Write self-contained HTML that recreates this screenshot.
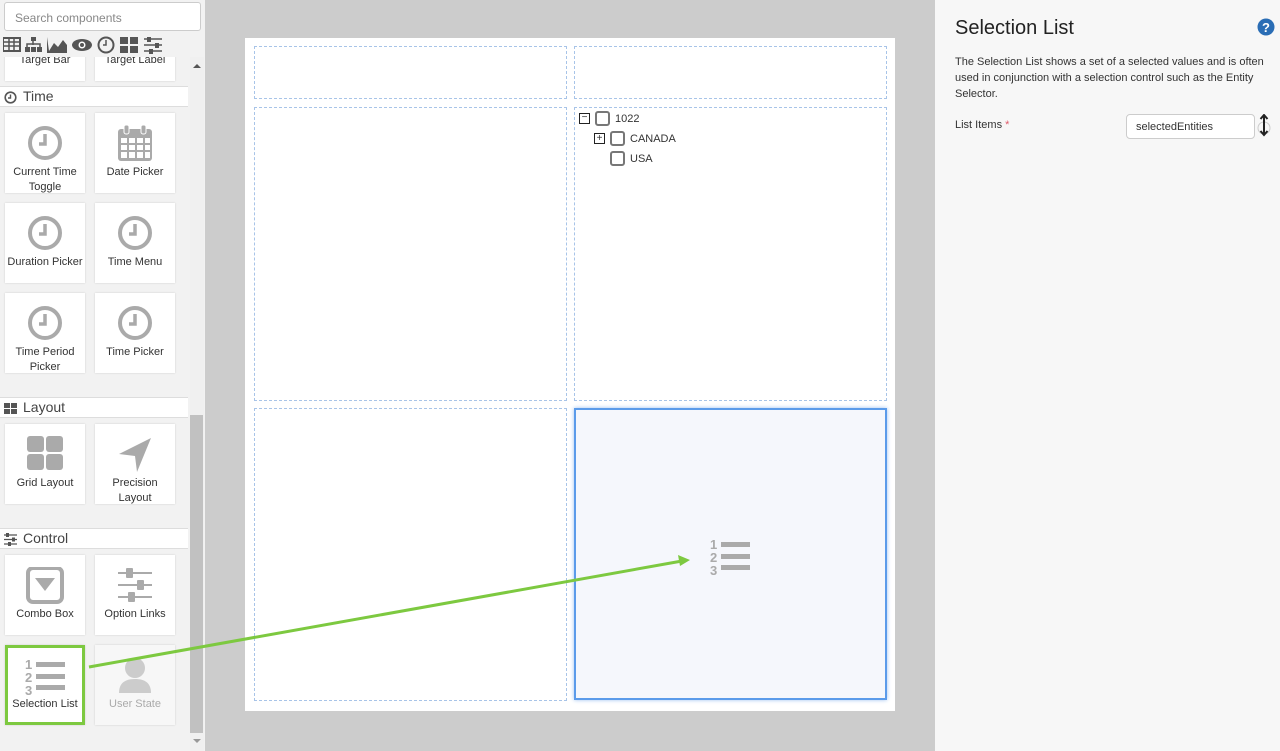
<!DOCTYPE html>
<html><head><meta charset="utf-8"><style>
*{box-sizing:border-box;margin:0;padding:0}
body{width:1280px;height:751px;overflow:hidden;position:relative;font-family:"Liberation Sans",sans-serif;background:#ccc}
.side{position:absolute;left:0;top:0;width:205px;height:751px;background:#f2f2f2}
.search{position:absolute;left:4px;top:2px;width:197px;height:29px;border:1px solid #ccc;border-radius:3px;background:#fff;font-size:12px;color:#888;padding:8px 10px}
.icons{position:absolute;left:3px;top:35px;height:20px;width:190px}
.tile{position:absolute;width:80px;height:80px;background:#fff;box-shadow:0 0 2px rgba(0,0,0,.15);font-size:11px;color:#333;text-align:center}
.tile .lb{position:absolute;top:52px;left:0;right:0;line-height:15px}
.tile svg{position:absolute;left:20px;top:12px}
.hdr{position:absolute;left:0;width:188px;height:21px;background:#fff;border-top:1px solid #ddd;border-bottom:1px solid #ddd;font-size:14px;color:#444;padding:1px 0 0 23px}
.hdr svg{position:absolute;left:4px;top:4px}
.sb{position:absolute;left:190px;top:57px;width:14px;height:694px;background:#f0f0f0}
.thumb{position:absolute;left:190px;top:415px;width:13px;height:318px;background:#c1c1c1}
.page{position:absolute;left:245px;top:38px;width:650px;height:673px;background:#fff}
.cell{position:absolute;border:1px dashed #a8c4e8}
.right{position:absolute;left:935px;top:0;width:345px;height:751px;background:#f7f7f7}
</style></head><body>
<div class="side">
<div class="search">Search components</div>
<svg class="icons" viewBox="0 0 190 20">
<g fill="#555">
<rect x="0" y="3" width="17" height="13" fill="none" stroke="#555" stroke-width="2"/><path d="M0 7h17M0 11h17M6 3v13M11 3v13" stroke="#555" stroke-width="1.5"/>
<rect x="28" y="2" width="5" height="4"/><rect x="22" y="12" width="5" height="5"/><rect x="28" y="12" width="5" height="5"/><rect x="34" y="12" width="5" height="5"/><path d="M30 6v4M24 12v-3h13v3" stroke="#555" stroke-width="1.5" fill="none"/>
<path d="M44 2v16h20v-2H46z"/><path d="M46 16l5-8 4 4 5-7 4 5v6z"/>
<ellipse cx="79" cy="10" rx="10" ry="6"/><circle cx="79" cy="10" r="3.5" fill="#fff"/><circle cx="79" cy="10" r="2"/>
<circle cx="103" cy="10" r="7.5" fill="none" stroke="#555" stroke-width="2"/><path d="M103 5v5h-3" stroke="#555" stroke-width="1.5" fill="none"/>
<rect x="117" y="2" width="8" height="7"/><rect x="127" y="2" width="8" height="7"/><rect x="117" y="11" width="8" height="7"/><rect x="127" y="11" width="8" height="7"/>
<path d="M141 4h18M141 10h18M141 16h18" stroke="#555" stroke-width="1.5"/><rect x="144" y="2" width="4" height="5"/><rect x="152" y="8" width="4" height="5"/><rect x="146" y="14" width="4" height="5"/>
</g></svg>
<div style="position:absolute;left:0;top:57px;width:190px;height:694px;overflow:hidden">
<div class="tile" style="left:5px;top:-56px"><div class="lb">Target Bar</div></div>
<div class="tile" style="left:95px;top:-56px"><div class="lb">Target Label</div></div>
</div>
<div class="hdr" style="top:86px"><svg width="13" height="13"><circle cx="6.5" cy="6.5" r="5.3" fill="none" stroke="#555" stroke-width="1.6"/><path d="M6.5 3.5v3.5h-2.5" stroke="#555" stroke-width="1.4" fill="none"/></svg>Time</div>
<div class="hdr" style="top:397px"><svg width="13" height="13"><rect x="0" y="1" width="6" height="5" fill="#555"/><rect x="7" y="1" width="6" height="5" fill="#555"/><rect x="0" y="7" width="6" height="5" fill="#555"/><rect x="7" y="7" width="6" height="5" fill="#555"/></svg>Layout</div>
<div class="hdr" style="top:528px"><svg width="13" height="13"><path d="M0 2h13M0 6.5h13M0 11h13" stroke="#555" stroke-width="1.2"/><rect x="2" y="0" width="3" height="4" fill="#555"/><rect x="8" y="4.5" width="3" height="4" fill="#555"/><rect x="4" y="9" width="3" height="4" fill="#555"/></svg>Control</div>
<svg width="0" height="0"><defs><g id="clk"><circle cx="20" cy="18" r="15" fill="none" stroke="#aaa" stroke-width="4"/><path d="M20 9v10h-6" stroke="#aaa" stroke-width="3.5" fill="none"/></g></defs></svg>
<div class="tile" style="left:5px;top:113px"><svg width="40" height="40"><use href="#clk"/></svg><div class="lb">Current Time<br>Toggle</div></div>
<div class="tile" style="left:95px;top:113px"><svg width="40" height="40"><rect x="3" y="4" width="34" height="32" rx="3" fill="#aaa"/><g fill="#fff"><rect x="6" y="13" width="6" height="5"/><rect x="14" y="13" width="6" height="5"/><rect x="22" y="13" width="6" height="5"/><rect x="30" y="13" width="5" height="5"/><rect x="6" y="20" width="6" height="5"/><rect x="14" y="20" width="6" height="5"/><rect x="22" y="20" width="6" height="5"/><rect x="30" y="20" width="5" height="5"/><rect x="6" y="27" width="6" height="6"/><rect x="14" y="27" width="6" height="6"/><rect x="22" y="27" width="6" height="6"/><rect x="30" y="27" width="5" height="6"/></g><rect x="9" y="0" width="5" height="9" rx="2" fill="#aaa" stroke="#fff"/><rect x="26" y="0" width="5" height="9" rx="2" fill="#aaa" stroke="#fff"/></svg><div class="lb">Date Picker</div></div>
<div class="tile" style="left:5px;top:203px"><svg width="40" height="40"><use href="#clk"/></svg><div class="lb">Duration Picker</div></div>
<div class="tile" style="left:95px;top:203px"><svg width="40" height="40"><use href="#clk"/></svg><div class="lb">Time Menu</div></div>
<div class="tile" style="left:5px;top:293px"><svg width="40" height="40"><use href="#clk"/></svg><div class="lb">Time Period<br>Picker</div></div>
<div class="tile" style="left:95px;top:293px"><svg width="40" height="40"><use href="#clk"/></svg><div class="lb">Time Picker</div></div>
<div class="tile" style="left:5px;top:424px"><svg width="40" height="40"><rect x="2" y="0" width="17" height="16" rx="3" fill="#aaa"/><rect x="21" y="0" width="17" height="16" rx="3" fill="#aaa"/><rect x="2" y="18" width="17" height="16" rx="3" fill="#aaa"/><rect x="21" y="18" width="17" height="16" rx="3" fill="#aaa"/></svg><div class="lb">Grid Layout</div></div>
<div class="tile" style="left:95px;top:424px"><svg width="40" height="40"><path d="M36 2L4 18l16 2 2 16z" fill="#aaa"/></svg><div class="lb">Precision<br>Layout</div></div>
<div class="tile" style="left:5px;top:555px"><svg width="40" height="40"><rect x="3" y="1" width="34" height="34" rx="5" fill="none" stroke="#aaa" stroke-width="4"/><path d="M10 11h20l-10 13z" fill="#aaa"/></svg><div class="lb">Combo Box</div></div>
<div class="tile" style="left:95px;top:555px"><svg width="40" height="40"><path d="M3 6h34M3 18h34M3 30h34" stroke="#aaa" stroke-width="2"/><rect x="11" y="1" width="7" height="10" rx="1" fill="#aaa"/><rect x="22" y="13" width="7" height="10" rx="1" fill="#aaa"/><rect x="13" y="25" width="7" height="10" rx="1" fill="#aaa"/></svg><div class="lb">Option Links</div></div>
<div class="tile" style="left:5px;top:645px;border:3px solid #7dc940"><svg width="40" height="40" style="left:17px;top:9px"><text x="0" y="12" font-size="13" font-weight="bold" fill="#aaa" font-family="Liberation Sans">1</text><text x="0" y="25" font-size="13" font-weight="bold" fill="#aaa" font-family="Liberation Sans">2</text><text x="0" y="38" font-size="13" font-weight="bold" fill="#aaa" font-family="Liberation Sans">3</text><rect x="11" y="5" width="29" height="5" fill="#aaa"/><rect x="11" y="17" width="29" height="5" fill="#aaa"/><rect x="11" y="28" width="29" height="5" fill="#aaa"/></svg><div class="lb" style="top:49px">Selection List</div></div>
<div class="tile" style="left:95px;top:645px;background:#f7f7f7;color:#aaa"><svg width="40" height="40"><circle cx="20" cy="11" r="10" fill="#ccc"/><path d="M4 36c0-10 6-14 16-14s16 4 16 14z" fill="#ccc"/></svg><div class="lb">User State</div></div>
</div>
<div class="sb"></div><div class="thumb"></div>
<div style="position:absolute;left:193px;top:64px;width:0;height:0;border:4px solid transparent;border-bottom:4px solid #555;border-top:0"></div>
<div style="position:absolute;left:193px;top:739px;width:0;height:0;border:4px solid transparent;border-top:4px solid #999;border-bottom:0"></div>
<div class="page">
<div class="cell" style="left:9px;top:8px;width:313px;height:53px"></div>
<div class="cell" style="left:329px;top:8px;width:313px;height:53px"></div>
<div class="cell" style="left:9px;top:69px;width:313px;height:294px"></div>
<div class="cell" style="left:329px;top:69px;width:313px;height:294px"></div>
<div class="cell" style="left:9px;top:370px;width:313px;height:293px"></div>
<div style="position:absolute;left:329px;top:370px;width:313px;height:292px;border:2px solid #5b9bea;background:#f5f7fc;box-shadow:0 0 4px #9cc0f0"></div>
<svg style="position:absolute;left:465px;top:499px" width="42" height="42"><text x="0" y="12" font-size="13" font-weight="bold" fill="#aaa" font-family="Liberation Sans">1</text><text x="0" y="25" font-size="13" font-weight="bold" fill="#aaa" font-family="Liberation Sans">2</text><text x="0" y="38" font-size="13" font-weight="bold" fill="#aaa" font-family="Liberation Sans">3</text><rect x="11" y="5" width="29" height="5" fill="#aaa"/><rect x="11" y="17" width="29" height="5" fill="#aaa"/><rect x="11" y="28" width="29" height="5" fill="#aaa"/></svg>
<div style="position:absolute;left:334px;top:73px;font-size:11px;color:#333">
<div style="position:absolute;left:0;top:2px;width:11px;height:11px;border:1px solid #222;font-size:10px;line-height:8px;text-align:center">−</div>
<div style="position:absolute;left:16px;top:0;width:15px;height:15px;border:2px solid #777;border-radius:3px"></div>
<div style="position:absolute;left:36px;top:2px">1022</div>
<div style="position:absolute;left:15px;top:22px;width:11px;height:11px;border:1px solid #222;font-size:10px;line-height:9px;text-align:center">+</div>
<div style="position:absolute;left:31px;top:20px;width:15px;height:15px;border:2px solid #777;border-radius:3px"></div>
<div style="position:absolute;left:51px;top:22px">CANADA</div>
<div style="position:absolute;left:31px;top:40px;width:15px;height:15px;border:2px solid #777;border-radius:3px"></div>
<div style="position:absolute;left:51px;top:42px">USA</div>
</div>
</div>
<svg style="position:absolute;left:0;top:0" width="1280" height="751"><line x1="89" y1="667" x2="682" y2="561" stroke="#7dc940" stroke-width="3"/><path d="M690 560l-12-5 2 11z" fill="#7dc940"/></svg>
<div class="right">
<div style="position:absolute;left:20px;top:17px;font-size:20px;color:#222">Selection List</div>
<svg style="position:absolute;left:322px;top:18px" width="18" height="18"><circle cx="9" cy="9" r="8.5" fill="#2a6db5"/><text x="9" y="14" font-size="13" font-weight="bold" fill="#fff" text-anchor="middle" font-family="Liberation Sans">?</text></svg>
<div style="position:absolute;left:20px;top:54px;width:320px;font-size:11px;line-height:16px;color:#333">The Selection List shows a set of a selected values and is often used in conjunction with a selection control such as the Entity Selector.</div>
<div style="position:absolute;left:20px;top:119px;font-size:11px;color:#333">List Items <span style="color:#e05a6a">*</span></div>
<div style="position:absolute;left:191px;top:114px;width:129px;height:25px;border:1px solid #ccc;border-radius:4px;background:#fff;font-size:11px;color:#333;padding:6px 9px">selectedEntities</div>
<svg style="position:absolute;left:321px;top:114px" width="16" height="24"><circle cx="8" cy="14" r="6" fill="none" stroke="#ccc"/><path d="M8 2v18M4.5 5L8 1l3.5 4M4.5 17L8 21l3.5-4" stroke="#222" stroke-width="2" fill="none"/></svg>
</div>
</body></html>
